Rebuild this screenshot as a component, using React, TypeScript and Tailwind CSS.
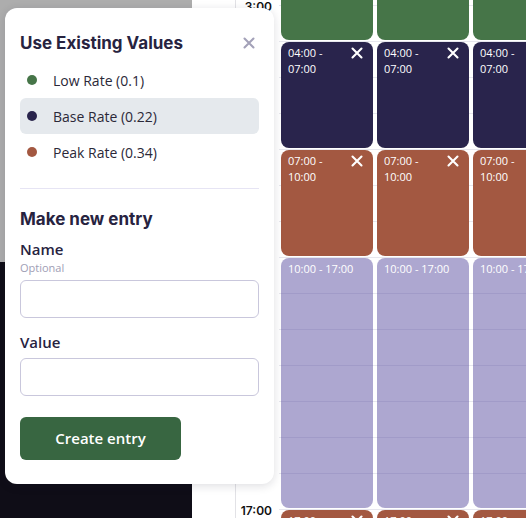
import * as React from "react";

const HOURS = [
  "2:00", "3:00", "4:00", "5:00", "6:00", "7:00", "8:00", "9:00",
  "10:00", "11:00", "12:00", "13:00", "14:00", "15:00", "16:00", "17:00",
];

// full class names so tailwind picks them up
const ROW_START = [
  "row-start-1", "row-start-2", "row-start-3", "row-start-4",
  "row-start-5", "row-start-6", "row-start-7", "row-start-8",
  "row-start-9", "row-start-10", "row-start-11", "row-start-12",
  "row-start-13", "row-start-14", "row-start-15", "row-start-16",
];

const RATES = [
  { name: "Low Rate (0.1)", dot: "bg-[#467548]" },
  { name: "Base Rate (0.22)", dot: "bg-[#29244c]", active: true },
  { name: "Peak Rate (0.34)", dot: "bg-[#a35841]" },
];

function Cross({ className }: { className?: string }) {
  return (
    <svg viewBox="0 0 12 12" className={className} fill="none">
      <path d="M1.5 1.5l9 9M10.5 1.5l-9 9" stroke="currentColor" strokeWidth="2.1" strokeLinecap="round" />
    </svg>
  );
}

function Block({ className, label, removable = true }: { className: string; label?: string; removable?: boolean }) {
  return (
    <div className={`col-start-1 mx-[2px] my-[1px] flex items-start justify-between rounded-lg pl-[7px] pr-[10px] pt-[3px] ${className}`}>
      {label && (
        <span className={`text-[11px] leading-4 font-medium text-white ${removable ? "w-[52px]" : ""}`}>{label}</span>
      )}
      {removable && label && <Cross className="mt-[2px] h-[12px] w-[12px] text-white" />}
    </div>
  );
}

function DayColumn() {
  return (
    <div className="grid w-[96px] shrink-0 grid-cols-1 grid-rows-[repeat(16,36px)]">
      {ROW_START.map((r) => (
        <div key={r} className={`${r} col-start-1 border-t border-[#e7e7ee]`} />
      ))}
      <Block className="row-start-1 row-span-2 bg-[#467548]" />
      <Block className="row-start-3 row-span-3 bg-[#29244c]" label="04:00 - 07:00" />
      <Block className="row-start-6 row-span-3 bg-[#a35841]" label="07:00 - 10:00" />
      <Block className="row-start-9 row-span-7 bg-[#5c50a1]/50" label="10:00 - 17:00" removable={false} />
      <Block className="row-start-16 row-span-1 bg-[#a35841]" label="17:00 - 18:00" />
    </div>
  );
}

export default function App() {
  return (
    <div className="relative flex h-[518px] w-[526px] overflow-hidden bg-white font-['Open_Sans',sans-serif]">
      <div className="flex w-[192px] shrink-0 flex-col">
        <div className="h-[262px] bg-[#adadad]" />
        <div className="flex-1 bg-[#0f0d17]" />
      </div>
      <div className="w-[44px] shrink-0 border-r border-[#e2e2e6]" />
      <div className="-mt-[47px] flex w-[43px] shrink-0 flex-col items-end pr-[7px] font-['Inter',sans-serif]">
        {HOURS.map((h) => (
          <div key={h} className="flex h-[36px] shrink-0 items-center text-[12px] font-semibold text-[#111]">
            {h}
          </div>
        ))}
      </div>
      <div className="-mt-[31px] flex">
        <DayColumn />
        <DayColumn />
        <DayColumn />
      </div>

      <div className="absolute left-[5px] top-[8px] w-[269px] rounded-xl bg-white px-[15px] pb-[24px] pt-[24px] shadow-[0_2px_10px_rgba(20,18,40,0.14)]">
        <div className="flex items-center justify-between">
          <h3 className="font-['Inter',sans-serif] text-[17px] leading-[22px] font-bold text-[#27233f]">
            Use Existing Values
          </h3>
          <Cross className="mr-[4px] h-[12px] w-[12px] text-[#a3a1b8]" />
        </div>
        <ul className="mt-[8px]">
          {RATES.map((r) => (
            <li
              key={r.name}
              className={`flex h-[36px] items-center gap-[16px] rounded-md px-[7px] text-[14px] text-[#2b2838] ${r.active ? "bg-[#e5e9ed]" : ""}`}
            >
              <span className={`h-[10px] w-[10px] rounded-full ${r.dot}`} />
              {r.name}
            </li>
          ))}
        </ul>
        <div className="mt-[18px] h-px bg-[#e6e4f4]" />
        <h3 className="mt-[19px] font-['Inter',sans-serif] text-[17px] leading-[22px] font-bold text-[#27233f]">
          Make new entry
        </h3>
        <label className="mt-[9px] block text-[15px] leading-[20px] font-semibold text-[#27233f]">Name</label>
        <div className="mt-[2px] text-[11px] leading-[14px] text-[#a09eb5]">Optional</div>
        <input className="mt-[5px] block h-[38px] w-full rounded-md border border-[#c9c7dc] bg-white outline-none" />
        <label className="mt-[14px] block text-[15px] leading-[20px] font-semibold text-[#27233f]">Value</label>
        <input className="mt-[6px] block h-[38px] w-full rounded-md border border-[#c9c7dc] bg-white outline-none" />
        <button
          type="button"
          className="mt-[21px] h-[43px] w-[161px] rounded-md bg-[#386641] text-[15px] font-semibold text-white"
        >
          Create entry
        </button>
      </div>
    </div>
  );
}
